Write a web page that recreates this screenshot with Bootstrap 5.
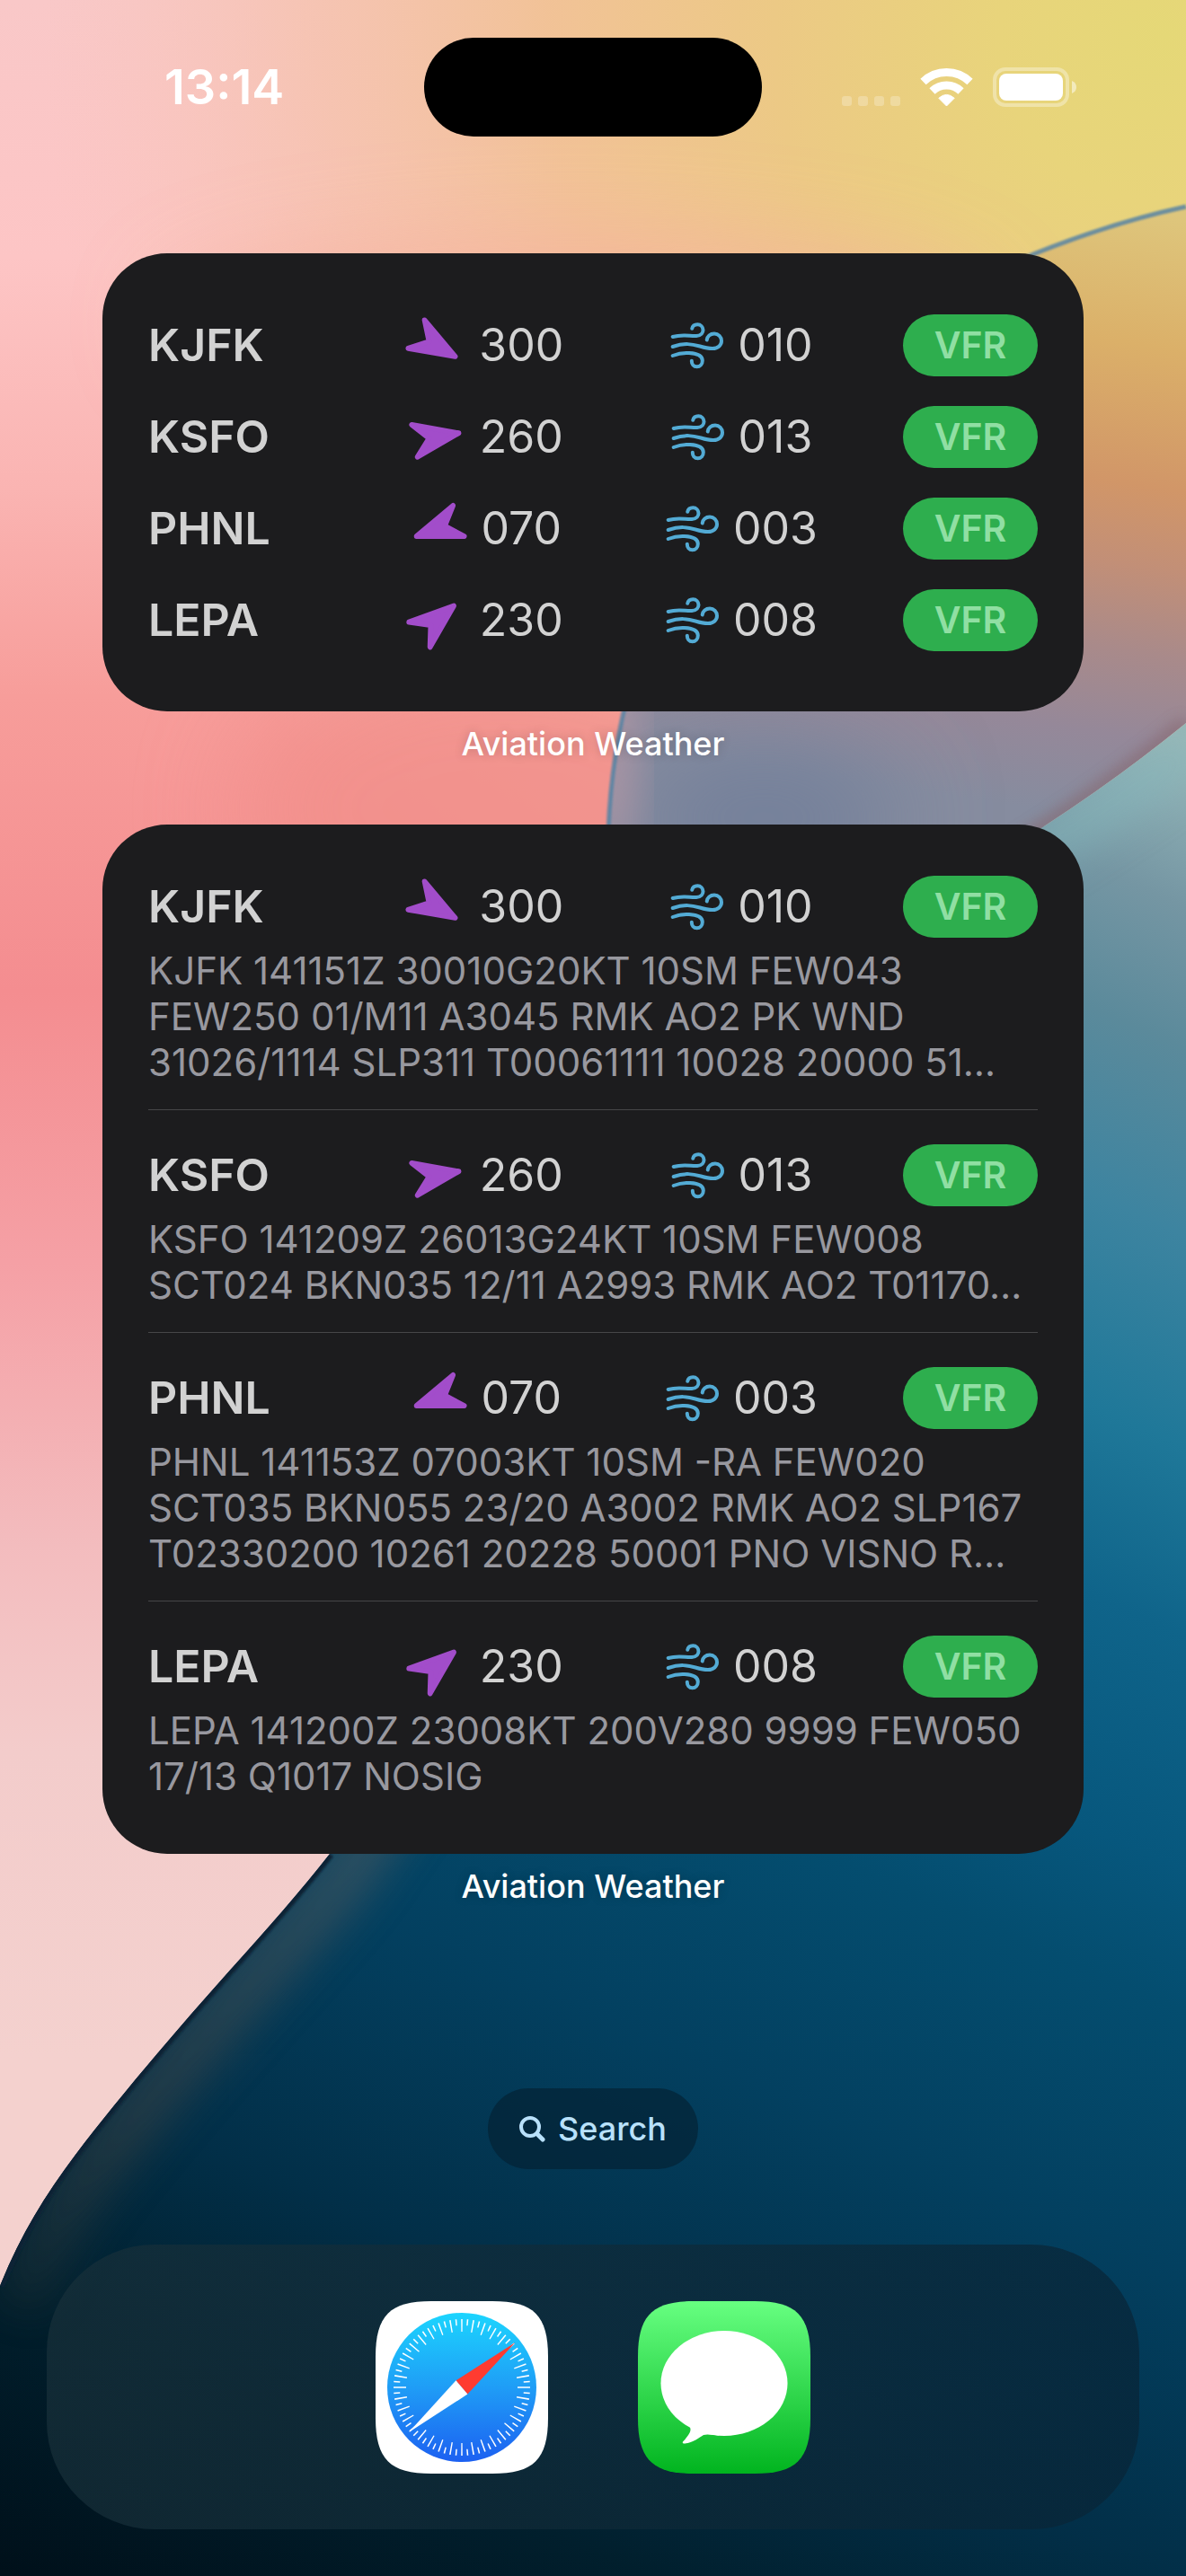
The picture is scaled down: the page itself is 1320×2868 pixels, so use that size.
<!DOCTYPE html>
<html lang="en">
<head>
<meta charset="utf-8">
<meta name="viewport" content="width=device-width, initial-scale=1">
<title>Home Screen</title>
<link href="https://cdn.jsdelivr.net/npm/bootstrap@5.3.0/dist/css/bootstrap.min.css" rel="stylesheet">
<style>
  body { font-family: Inter, "Liberation Sans", sans-serif; background: #02304a; color: #fff; }
  .home { min-height: 100vh; isolation: isolate; }
  .wallpaper { z-index: -1; }
  .status { padding-top: 42px; }
  .clock { font-size: 54px; line-height: 64px; font-weight: 600; margin-left: 183px; }
  .island { width: 376px; height: 110px; background: #000; }
  .status-icons { gap: 22px; margin-right: 122px; }
  .widgets { padding: 130px 114px 0; }
  .widget { background: #1c1c1e; border-radius: 72px; color: #d2d2d2; }
  .widget-small { padding: 68px 51px 67px; gap: 33px; }
  .widget-large { padding: 57px 51px 61px; }
  .widget-label { font-size: 36px; line-height: 48px; font-weight: 500; padding: 12px 0 66px; text-shadow: 0 0 12px rgba(0, 0, 0, .2); }
  .station { display: grid; grid-template-columns: 4fr 5fr 5fr 186px; align-items: center; font-size: 50px; line-height: 69px; }
  .station-id { font-weight: 600; }
  .reading-dir { gap: 12px; }
  .reading-wind { gap: 15px; }
  .arrow { width: 72px; height: 69px; overflow: visible; fill: #a24dca; stroke: #a24dca; stroke-width: 6px; stroke-linejoin: round; }
  .wind { width: 60px; height: 52px; fill: none; stroke: #53abd5; stroke-width: 4px; stroke-linecap: round; }
  .flight-rule { width: 150px; border-radius: 35px; background: #2eae4e; color: #90dfa3; font-size: 41px; font-weight: 600; justify-self: end; }
  .metar { font-size: 42px; line-height: 51px; color: #98989f; margin: 11px 0 0; white-space: nowrap; }
  .rule { border-top: 1px solid #464648; margin: 27px 0 38px; opacity: 1; }
  .search { margin-top: 135px; height: 90px; border-radius: 45px; padding: 0 35px; gap: 14px; border: 0; background: rgba(4, 34, 52, .7); color: #b9e1fb; font-size: 36px; font-weight: 500; }
  .dock { margin: 84px 52px 52px; height: 317px; border-radius: 120px; background: linear-gradient(90deg, rgba(24, 48, 58, .7), rgba(8, 36, 54, .7)); gap: 100px; }
</style>
</head>
<body>

<svg width="0" height="0" class="position-absolute" aria-hidden="true">
  <symbol id="arrow" viewBox="-36 -36 72 72"><path d="M0-26L19 26L0 9L-19 26Z"/></symbol>
  <symbol id="wind" viewBox="0 0 60 52">
    <path d="M2.7 16C14 12.5 22 15.5 29 15C40 14 37.5 2.3 30.3 2.3C26.8 2.3 24.8 4 24.3 6.7"/>
    <path d="M2.7 27C16 22.5 24 24 33 26.5C38 28 42 29 47 29C53.5 29 57 25 57 20.5C57 16 53.5 12.5 49 12.5C44.5 12.5 41 15.5 40.7 19.5"/>
    <path d="M2.7 37C9 34.5 16 33.7 21 34C30 34.5 35.8 37.5 35.8 42.5C35.8 46.5 33 49.3 29.7 49.3C26 49.3 23.8 46.5 23.8 42.7"/>
  </symbol>
</svg>

<div class="home position-relative overflow-hidden d-flex flex-column">

  <svg class="wallpaper position-absolute top-0 start-0 w-100 h-100" viewBox="0 0 1320 2868" preserveAspectRatio="none" aria-hidden="true">
    <defs>
      <linearGradient id="pink" x1="0" y1="0" x2="0" y2="1">
        <stop offset="0" stop-color="#f9c8c8"/><stop offset=".1" stop-color="#fdc5c5"/><stop offset=".19" stop-color="#fab4b2"/>
        <stop offset=".27" stop-color="#f79d9a"/><stop offset=".385" stop-color="#f48d90"/><stop offset=".49" stop-color="#f5a0a5"/>
        <stop offset=".6" stop-color="#f3bcbe"/><stop offset=".68" stop-color="#f3cccb"/><stop offset=".8" stop-color="#f4d1ce"/>
      </linearGradient>
      <radialGradient id="sun" gradientUnits="userSpaceOnUse" cx="1300" cy="40" r="1250">
        <stop offset="0" stop-color="#e5d877"/><stop offset=".15" stop-color="#e8d47b"/><stop offset=".35" stop-color="#ecc985"/>
        <stop offset=".55" stop-color="#f1c294" stop-opacity=".95"/><stop offset=".75" stop-color="#f4c2a8" stop-opacity=".7"/><stop offset="1" stop-color="#f6c4b8" stop-opacity="0"/>
      </radialGradient>
      <linearGradient id="petal" gradientUnits="userSpaceOnUse" x1="1250" y1="230" x2="1150" y2="900">
        <stop offset="0" stop-color="#dec67c"/><stop offset=".22" stop-color="#dbb069"/><stop offset=".45" stop-color="#d19668"/>
        <stop offset=".58" stop-color="#c28f77"/><stop offset=".72" stop-color="#a98a8a"/><stop offset=".86" stop-color="#958899"/><stop offset="1" stop-color="#868c9f"/>
      </linearGradient>
      <linearGradient id="sea" gradientUnits="userSpaceOnUse" x1="1260" y1="800" x2="295" y2="2993">
        <stop offset="0" stop-color="#98b6b6"/><stop offset=".03" stop-color="#88a9b0"/><stop offset=".07" stop-color="#7596a3"/>
        <stop offset=".13" stop-color="#5b8a9b"/><stop offset=".21" stop-color="#3d84a0"/><stop offset=".3" stop-color="#1f7899"/>
        <stop offset=".38" stop-color="#0f648a"/><stop offset=".48" stop-color="#07577d"/><stop offset=".54" stop-color="#044d6f"/>
        <stop offset=".65" stop-color="#034060"/><stop offset=".78" stop-color="#022f48"/><stop offset=".88" stop-color="#011f2d"/><stop offset="1" stop-color="#00101a"/>
      </linearGradient>
      <linearGradient id="shore" gradientUnits="userSpaceOnUse" x1="0" y1="2064" x2="0" y2="2700">
        <stop offset="0" stop-color="#66625f"/><stop offset=".5" stop-color="#4a4640"/><stop offset="1" stop-color="#4a4640" stop-opacity="0"/>
      </linearGradient>
      <filter id="soft1" x="-20%" y="-20%" width="140%" height="140%"><feGaussianBlur stdDeviation="1"/></filter>
      <filter id="soft10" x="-50%" y="-50%" width="200%" height="200%"><feGaussianBlur stdDeviation="8"/></filter>
      <filter id="soft20" x="-50%" y="-50%" width="200%" height="200%"><feGaussianBlur stdDeviation="24"/></filter>
      <filter id="soft60" x="-80%" y="-80%" width="260%" height="260%"><feGaussianBlur stdDeviation="55"/></filter>
      <path id="petal-shape" d="M1320 230C1260 243 1205 261 1150 283C900 390 690 600 677 925L700 1100H1100L1162 920Q1245 866 1320 805Z"/>
      <path id="sea-shape" d="M0 2545C22 2490 50 2444 84 2399C130 2338 195 2262 252 2198C297 2148 335 2105 367 2064C560 1800 720 1200 1162 920Q1245 866 1320 805V2868H0Z"/>
      <clipPath id="petal-clip"><use href="#petal-shape"/></clipPath>
      <clipPath id="sea-clip"><use href="#sea-shape"/></clipPath>
    </defs>
    <rect width="1320" height="2868" fill="url(#pink)"/>
    <rect width="1320" height="1400" fill="url(#sun)"/>
    <ellipse cx="640" cy="360" rx="460" ry="90" fill="#f6b09f" opacity=".7" filter="url(#soft60)"/>
    <ellipse cx="560" cy="900" rx="300" ry="180" fill="#f2908b" opacity=".85" filter="url(#soft60)"/>
    <use href="#petal-shape" fill="url(#petal)"/>
    <g clip-path="url(#petal-clip)">
      <ellipse cx="850" cy="910" rx="150" ry="70" fill="#727f9a" filter="url(#soft60)"/>
      <ellipse cx="680" cy="830" rx="24" ry="130" fill="#b096a5" filter="url(#soft20)"/>
      <path d="M1100 960L1162 920Q1245 866 1320 805" fill="none" stroke="#85646a" stroke-width="14" opacity=".7" filter="url(#soft10)"/>
    </g>
    <path d="M1320 230C1260 243 1205 261 1150 283C900 390 690 600 677 925" fill="none" stroke="#5884a4" stroke-width="5" opacity=".85" filter="url(#soft1)"/>
    <use href="#sea-shape" fill="url(#sea)"/>
    <g clip-path="url(#sea-clip)">
      <path d="M1130 960Q1220 910 1330 830" fill="none" stroke="#86bcc0" stroke-width="40" opacity=".6" filter="url(#soft20)"/>
      <path d="M20 2570C42 2515 70 2460 104 2415C150 2354 215 2280 272 2216C317 2166 355 2125 387 2084L470 1960" fill="none" stroke="url(#shore)" stroke-width="60" opacity=".45" filter="url(#soft20)"/>
      <path d="M0 2545C22 2490 50 2444 84 2399C130 2338 195 2262 252 2198C297 2148 335 2105 367 2064" fill="none" stroke="#0c2436" stroke-width="10" filter="url(#soft1)"/>
    </g>
  </svg>

  <header class="status d-flex align-items-center">
    <div class="col"><div class="clock">13:14</div></div>
    <div class="island rounded-pill"></div>
    <div class="col"><div class="status-icons d-flex align-items-center justify-content-end">
      <svg width="65" height="44" viewBox="0 0 65 44" fill="#fff" fill-opacity=".25" role="img" aria-label="No cellular signal"><rect y="32" width="11" height="11" rx="3"/><rect x="18" y="32" width="11" height="11" rx="3"/><rect x="36" y="32" width="11" height="11" rx="3"/><rect x="54" y="32" width="11" height="11" rx="3"/></svg>
      <svg width="59" height="44" viewBox="0 0 59 44" fill="none" stroke="#fff" stroke-width="9" role="img" aria-label="Wi-Fi"><path d="M3.5 16A37.5 37.5 0 0 1 55.5 16"/><path d="M13.5 26.5A23 23 0 0 1 45.5 26.5"/><path d="M29.5 43L20.8 34.3Q29.5 26.5 38.2 34.3Z" fill="#fff" stroke-width="1" stroke-linejoin="round"/></svg>
      <svg width="93" height="44" viewBox="0 0 93 44" fill="#fff" role="img" aria-label="Battery full"><rect x="2" y="2" width="81" height="40" rx="12" fill="none" stroke="#fff" stroke-opacity=".35" stroke-width="4"/><rect x="7" y="7" width="71" height="30" rx="8"/><path d="M88 15Q93 17 93 22Q93 27 88 29Z" fill-opacity=".5"/></svg>
    </div></div>
  </header>

  <main class="widgets">
    <section class="widget widget-small d-flex flex-column">
      <div class="station"><span class="station-id">KJFK</span><span class="reading-dir d-flex align-items-center justify-content-center"><svg class="arrow"><use href="#arrow" transform="rotate(120 36 34.5)"/></svg>300</span><span class="reading-wind d-flex align-items-center justify-content-center"><svg class="wind"><use href="#wind"/></svg>010</span><span class="flight-rule text-center">VFR</span></div>
      <div class="station"><span class="station-id">KSFO</span><span class="reading-dir d-flex align-items-center justify-content-center"><svg class="arrow"><use href="#arrow" transform="rotate(80 36 34.5)"/></svg>260</span><span class="reading-wind d-flex align-items-center justify-content-center"><svg class="wind"><use href="#wind"/></svg>013</span><span class="flight-rule text-center">VFR</span></div>
      <div class="station"><span class="station-id">PHNL</span><span class="reading-dir d-flex align-items-center justify-content-center"><svg class="arrow"><use href="#arrow" transform="rotate(250 36 34.5)"/></svg>070</span><span class="reading-wind d-flex align-items-center justify-content-center"><svg class="wind"><use href="#wind"/></svg>003</span><span class="flight-rule text-center">VFR</span></div>
      <div class="station"><span class="station-id">LEPA</span><span class="reading-dir d-flex align-items-center justify-content-center"><svg class="arrow"><use href="#arrow" transform="rotate(50 36 34.5)"/></svg>230</span><span class="reading-wind d-flex align-items-center justify-content-center"><svg class="wind"><use href="#wind"/></svg>008</span><span class="flight-rule text-center">VFR</span></div>
    </section>
    <div class="widget-label text-center">Aviation Weather</div>

    <section class="widget widget-large">
      <div class="station"><span class="station-id">KJFK</span><span class="reading-dir d-flex align-items-center justify-content-center"><svg class="arrow"><use href="#arrow" transform="rotate(120 36 34.5)"/></svg>300</span><span class="reading-wind d-flex align-items-center justify-content-center"><svg class="wind"><use href="#wind"/></svg>010</span><span class="flight-rule text-center">VFR</span></div>
      <p class="metar">KJFK 141151Z 30010G20KT 10SM FEW043<br>FEW250 01/M11 A3045 RMK AO2 PK WND<br>31026/1114 SLP311 T00061111 10028 20000 51…</p>
      <hr class="rule">
      <div class="station"><span class="station-id">KSFO</span><span class="reading-dir d-flex align-items-center justify-content-center"><svg class="arrow"><use href="#arrow" transform="rotate(80 36 34.5)"/></svg>260</span><span class="reading-wind d-flex align-items-center justify-content-center"><svg class="wind"><use href="#wind"/></svg>013</span><span class="flight-rule text-center">VFR</span></div>
      <p class="metar">KSFO 141209Z 26013G24KT 10SM FEW008<br>SCT024 BKN035 12/11 A2993 RMK AO2 T01170…</p>
      <hr class="rule">
      <div class="station"><span class="station-id">PHNL</span><span class="reading-dir d-flex align-items-center justify-content-center"><svg class="arrow"><use href="#arrow" transform="rotate(250 36 34.5)"/></svg>070</span><span class="reading-wind d-flex align-items-center justify-content-center"><svg class="wind"><use href="#wind"/></svg>003</span><span class="flight-rule text-center">VFR</span></div>
      <p class="metar">PHNL 141153Z 07003KT 10SM -RA FEW020<br>SCT035 BKN055 23/20 A3002 RMK AO2 SLP167<br>T02330200 10261 20228 50001 PNO VISNO R…</p>
      <hr class="rule">
      <div class="station"><span class="station-id">LEPA</span><span class="reading-dir d-flex align-items-center justify-content-center"><svg class="arrow"><use href="#arrow" transform="rotate(50 36 34.5)"/></svg>230</span><span class="reading-wind d-flex align-items-center justify-content-center"><svg class="wind"><use href="#wind"/></svg>008</span><span class="flight-rule text-center">VFR</span></div>
      <p class="metar">LEPA 141200Z 23008KT 200V280 9999 FEW050<br>17/13 Q1017 NOSIG</p>
    </section>
    <div class="widget-label text-center">Aviation Weather</div>
  </main>

  <button type="button" class="search d-flex align-items-center align-self-center">
    <svg width="29" height="29" viewBox="0 0 29 29" fill="none" stroke="#b9e1fb" stroke-linecap="round" aria-hidden="true"><circle cx="12" cy="12" r="10" stroke-width="4"/><path d="M20 20L26 26" stroke-width="5"/></svg>
    Search
  </button>

  <nav class="dock d-flex align-items-center justify-content-center" aria-label="Dock">
    <a href="#" aria-label="Safari"><svg class="d-block" width="192" height="192" viewBox="0 0 192 192" aria-hidden="true">
      <defs><linearGradient id="safari" x1="0" y1="0" x2="0" y2="1"><stop offset="0" stop-color="#1cd5fe"/><stop offset=".5" stop-color="#1f9df6"/><stop offset="1" stop-color="#1c60f1"/></linearGradient></defs>
      <path d="M0 62C0 16 16 0 62 0H130C176 0 192 16 192 62V130C192 176 176 192 130 192H62C16 192 0 176 0 130Z" fill="#fff"/>
      <circle cx="96" cy="96" r="83" fill="url(#safari)"/>
      <g fill="none" stroke="#fff">
        <circle cx="96" cy="96" r="69" stroke-width="14" pathLength="360" stroke-dasharray="1.2 8.8" stroke-dashoffset=".6"/>
        <circle cx="96" cy="96" r="72.5" stroke-width="7" pathLength="360" stroke-dasharray="1.2 8.8" stroke-dashoffset="5.6"/>
      </g>
      <path d="M155.5 46L89.5 88.3L102.4 103.6Z" fill="#ff3b30"/><path d="M37 146L89.5 88.3L102.4 103.6Z" fill="#fff"/>
    </svg></a>
    <a href="#" aria-label="Messages"><svg class="d-block" width="192" height="192" viewBox="0 0 192 192" aria-hidden="true">
      <defs><linearGradient id="messages" x1="0" y1="0" x2="0" y2="1"><stop offset="0" stop-color="#67ff81"/><stop offset="1" stop-color="#01b41f"/></linearGradient></defs>
      <path d="M0 62C0 16 16 0 62 0H130C176 0 192 16 192 62V130C192 176 176 192 130 192H62C16 192 0 176 0 130Z" fill="url(#messages)"/>
      <ellipse cx="96" cy="91.5" rx="70.5" ry="58.5" fill="#fff"/>
      <path d="M54 136C61 141 60 146 50 156.500Q49 159 52 158.500C62 157.500 68 152 73 149Q76 148 90 149.500L90 120Z" fill="#fff"/>
    </svg></a>
  </nav>
</div>

<script src="https://cdn.jsdelivr.net/npm/bootstrap@5.3.0/dist/js/bootstrap.bundle.min.js"></script>
</body>
</html>
